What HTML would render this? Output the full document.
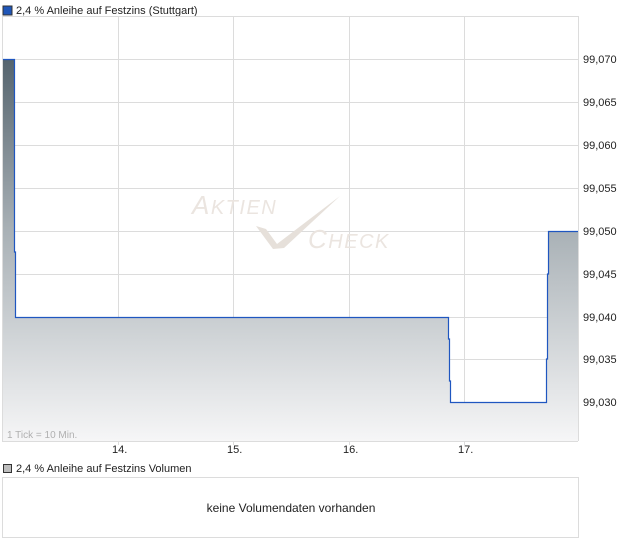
<!DOCTYPE html>
<html><head><meta charset="utf-8"><style>
body{margin:0;background:#fff;width:620px;height:546px;overflow:hidden;font-family:"Liberation Sans",sans-serif}
svg{display:block}
</style></head><body>
<svg width="620" height="546" xmlns="http://www.w3.org/2000/svg" font-family="Liberation Sans, sans-serif">
<defs>
<linearGradient id="g" gradientUnits="userSpaceOnUse" x1="0" y1="59" x2="0" y2="441">
<stop offset="0" stop-color="#55646e"/>
<stop offset="0.45" stop-color="#a9b1b6"/>
<stop offset="1" stop-color="#f6f6f7"/>
</linearGradient>
</defs>
<rect x="3" y="6" width="9" height="9" fill="#1f56b8" stroke="#333" stroke-width="1"/>
<text x="16" y="14" font-size="11" fill="#222">2,4 % Anleihe auf Festzins (Stuttgart)</text>
<g stroke="#dcdcdc" stroke-width="1">
<line x1="2" y1="16.5" x2="578" y2="16.5"/>
<line x1="2" y1="59.5" x2="578" y2="59.5"/><line x1="2" y1="102.5" x2="578" y2="102.5"/>
<line x1="2" y1="145.5" x2="578" y2="145.5"/><line x1="2" y1="188.5" x2="578" y2="188.5"/>
<line x1="2" y1="231.5" x2="578" y2="231.5"/><line x1="2" y1="274.5" x2="578" y2="274.5"/>
<line x1="2" y1="317.5" x2="578" y2="317.5"/><line x1="2" y1="359.5" x2="578" y2="359.5"/>
<line x1="2" y1="402.5" x2="578" y2="402.5"/>
<line x1="118.5" y1="16" x2="118.5" y2="445"/><line x1="233.5" y1="16" x2="233.5" y2="445"/>
<line x1="349.5" y1="16" x2="349.5" y2="445"/><line x1="464.5" y1="16" x2="464.5" y2="445"/>
<line x1="2.5" y1="16" x2="2.5" y2="441"/><line x1="578.5" y1="16" x2="578.5" y2="441"/>
<line x1="2" y1="441.5" x2="578" y2="441.5"/>
</g>
<g>
<text x="192" y="214" font-size="26" font-style="italic" fill="#ebe5e0" letter-spacing="1.5">A<tspan font-size="20">KTIEN</tspan></text>
<text x="308" y="248" font-size="26" font-style="italic" fill="#ebe5e0" letter-spacing="1.5">C<tspan font-size="20">HECK</tspan></text>
<path d="M256 226 L266 229 L277 244 L340 196 L284 248 L273 249 Z" fill="#e6e0da"/>
</g>
<path d="M3 59 H14 V252 H15 V317 H448 V339 H449 V381 H450 V402 H546 V359 H547 V274 H548 V231 H578 V441 H3 Z" fill="url(#g)"/>
<path d="M3 59.5 H14.5 V252 H15.5 V317.5 H448.5 V339 H449.5 V381 H450.5 V402.5 H546.5 V359 H547.5 V274 H548.5 V231.5 H578" fill="none" stroke="#1f56c0" stroke-width="1.2"/>
<g font-size="11" fill="#222">
<text x="583" y="63">99,070</text><text x="583" y="106">99,065</text><text x="583" y="149">99,060</text>
<text x="583" y="192">99,055</text><text x="583" y="235">99,050</text><text x="583" y="278">99,045</text>
<text x="583" y="321">99,040</text><text x="583" y="363">99,035</text><text x="583" y="406">99,030</text>
<text x="112" y="453">14.</text><text x="227" y="453">15.</text><text x="343" y="453">16.</text><text x="458" y="453">17.</text>
</g>
<text x="7" y="438" font-size="10" fill="#b0b0b0">1 Tick = 10 Min.</text>
<rect x="3.5" y="464.5" width="8" height="8" fill="#bdbdbd" stroke="#333" stroke-width="1"/>
<text x="16" y="472" font-size="11" fill="#222">2,4 % Anleihe auf Festzins Volumen</text>
<rect x="2.5" y="477.5" width="576" height="60" fill="#fff" stroke="#dcdcdc"/>
<text x="291" y="512" font-size="12" fill="#222" text-anchor="middle">keine Volumendaten vorhanden</text>
</svg>
</body></html>
